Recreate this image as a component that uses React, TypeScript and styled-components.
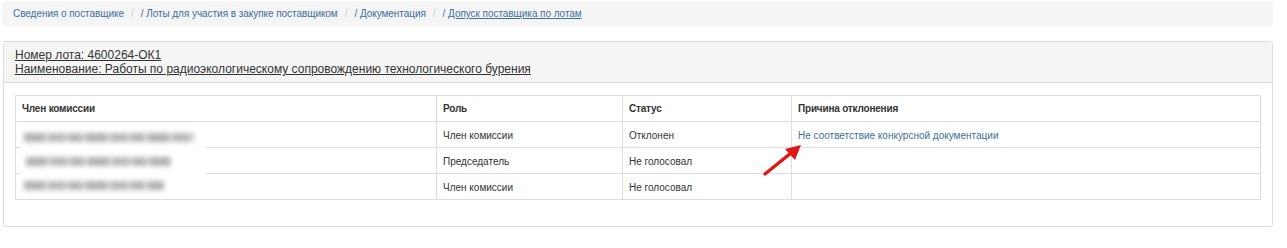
import React from "react";
import styled, { createGlobalStyle } from "styled-components";

const Global = createGlobalStyle`
  html, body { margin: 0; padding: 0; background: #fff; }
  body { font-family: "Liberation Sans", Arial, sans-serif; color: #333; }
`;

const Page = styled.div`
  padding: 1px 6px 0 2px;
  width: 1279px;
  box-sizing: border-box;
`;

const Breadcrumb = styled.ol`
  list-style: none;
  margin: 0;
  height: 25px;
  padding: 0 11px;
  background: #f5f5f5;
  border-radius: 4px;
  display: flex;
  align-items: center;
  font-size: 10px;
  letter-spacing: -0.05px;
`;

const Crumb = styled.li<{ $first?: boolean }>`
  display: flex;
  align-items: center;
  color: #3f6f9c;
  &::before {
    content: ${(p) => (p.$first ? "none" : '"/"')};
    color: #ccc;
    padding: 0 7px;
  }
`;

const CrumbLink = styled.a<{ $active?: boolean }>`
  color: #3f6f9c;
  text-decoration: ${(p) => (p.$active ? "underline" : "none")};
`;

const Panel = styled.div`
  margin: 15px 0 0 1px;
  border: 1px solid #ddd;
  border-radius: 3px;
  overflow: hidden;
`;

const PanelHeading = styled.div`
  background: #f5f5f5;
  border-bottom: 1px solid #ddd;
  padding: 6px 11px 4px;
  font-size: 12px;
  line-height: 14px;
  height: 30px;
`;

const HeadLine = styled.a`
  display: block;
  color: #333;
  text-decoration: underline;
`;

const PanelBody = styled.div`
  padding: 12px 11px 26px;
`;

const TableWrap = styled.div`
  position: relative;
`;

const Table = styled.table`
  width: 100%;
  border-collapse: collapse;
  font-size: 10px;
  border: 1px solid #ddd;
  table-layout: fixed;
`;

const Th = styled.th<{ $w?: number }>`
  text-align: left;
  font-weight: bold;
  letter-spacing: -0.2px;
  color: #333;
  height: 25px;
  padding: 0 6px;
  border: 1px solid #ddd;
  width: ${(p) => (p.$w ? `${p.$w}px` : "auto")};
`;

const Td = styled.td`
  height: 24px;
  padding: 1px 6px 0;
  border: 1px solid #ddd;
  color: #333;
`;

const ReasonLink = styled.a`
  color: #3f6f9c;
  text-decoration: none;
`;

const Redaction = styled.div`
  position: absolute;
  left: 5px;
  top: 27px;
  width: 186px;
  height: 77px;
  background: #fff;
  display: flex;
  flex-direction: column;
  justify-content: space-around;
  padding: 3px 0 2px 2px;
  box-sizing: border-box;
`;

const BlurText = styled.span<{ $w: number; $o: number }>`
  display: block;
  width: ${(p) => p.$w}px;
  margin-left: ${(p) => p.$o}px;
  height: 9px;
  background: repeating-linear-gradient(90deg, #a4a4a4 0 20px, #c8c8c8 20px 25px, #adadad 25px 41px, #cccccc 41px 45px, #a8a8a8 45px 58px, #d4d4d4 58px 62px);
  filter: blur(2.6px);
  opacity: 0.85;
`;

const Arrow = styled.svg`
  position: absolute;
  left: 748px;
  top: 48px;
  overflow: visible;
`;

const rows = [
  { role: "Член комиссии", status: "Отклонен", reason: "Не соответствие конкурсной документации" },
  { role: "Председатель", status: "Не голосовал", reason: "" },
  { role: "Член комиссии", status: "Не голосовал", reason: "" },
];

export default function App() {
  return (
    <Page>
      <Global />
      <Breadcrumb>
        <Crumb $first><CrumbLink>Сведения о поставщике</CrumbLink></Crumb>
        <Crumb><CrumbLink>/ Лоты для участия в закупке поставщиком</CrumbLink></Crumb>
        <Crumb><CrumbLink>/ Документация</CrumbLink></Crumb>
        <Crumb>/&nbsp;<CrumbLink $active>Допуск поставщика по лотам</CrumbLink></Crumb>
      </Breadcrumb>
      <Panel>
        <PanelHeading>
          <HeadLine>Номер лота: 4600264-ОК1</HeadLine>
          <HeadLine>Наименование: Работы по радиоэкологическому сопровождению технологического бурения</HeadLine>
        </PanelHeading>
        <PanelBody>
          <TableWrap>
            <Table>
              <thead>
                <tr>
                  <Th $w={408}>Член комиссии</Th>
                  <Th $w={173}>Роль</Th>
                  <Th $w={156}>Статус</Th>
                  <Th>Причина отклонения</Th>
                </tr>
              </thead>
              <tbody>
                {rows.map((r, i) => (
                  <tr key={i}>
                    <Td></Td>
                    <Td>{r.role}</Td>
                    <Td>{r.status}</Td>
                    <Td>{r.reason && <ReasonLink>{r.reason}</ReasonLink>}</Td>
                  </tr>
                ))}
              </tbody>
            </Table>
            <Redaction>
              <BlurText $w={170} $o={2} />
              <BlurText $w={145} $o={4} />
              <BlurText $w={140} $o={2} />
            </Redaction>
            <Arrow width="40" height="34" viewBox="0 0 40 34">
              <line x1="2" y1="31" x2="28" y2="10" stroke="#e01818" strokeWidth="3.5" strokeLinecap="round" />
              <polygon points="38,2 22,6 32,17" fill="#e01818" />
            </Arrow>
          </TableWrap>
        </PanelBody>
      </Panel>
    </Page>
  );
}
